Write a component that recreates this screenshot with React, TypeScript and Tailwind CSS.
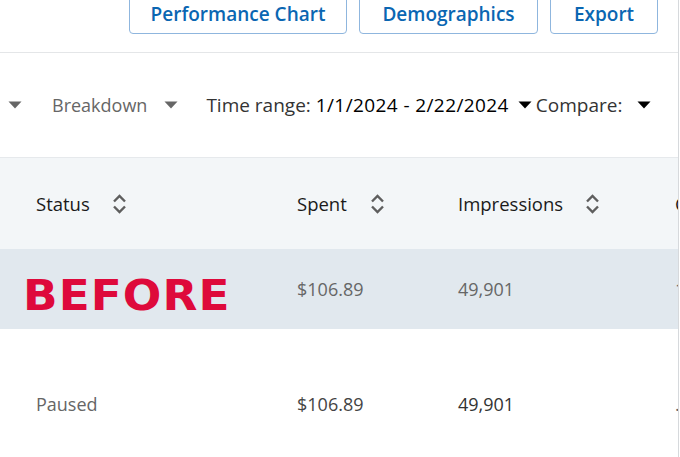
import React from "react";

const font = { fontFamily: '"Open Sans", "Noto Sans", sans-serif' };

function Caret({ color }: { color: string }) {
  return (
    <svg width="14" height="8" viewBox="0 0 14 8" className="shrink-0">
      <path d="M0.5 0.5 L13.5 0.5 L7 7.5 Z" fill={color} />
    </svg>
  );
}

function SortIcon() {
  return (
    <svg width="17" height="22" viewBox="0 0 17 22" className="shrink-0">
      <path d="M3 8.5 L8.5 3 L14 8.5" fill="none" stroke="#5e5e5e" strokeWidth="2.4" />
      <path d="M3 13.5 L8.5 19 L14 13.5" fill="none" stroke="#5e5e5e" strokeWidth="2.4" />
    </svg>
  );
}

export default function App() {
  return (
    <div className="w-[680px] h-[457px] overflow-hidden bg-white" style={font}>
      <div className="w-[679px] h-full border-r border-[#d6d9dc] overflow-hidden">
        {/* top buttons */}
        <div className="h-[53px] border-b border-[#e4e6e8] flex items-start">
          <div className="flex -mt-[10px] ml-[129px]">
            <button className="h-[44px] w-[218px] border border-[#8fb6de] rounded-[4px] text-[#0a66b2] text-[19px] font-semibold pt-[4px]">
              Performance Chart
            </button>
            <button className="h-[44px] w-[179px] ml-[12px] border border-[#8fb6de] rounded-[4px] text-[#0a66b2] text-[19px] font-semibold pt-[4px]">
              Demographics
            </button>
            <button className="h-[44px] w-[108px] ml-[12px] border border-[#8fb6de] rounded-[4px] text-[#0a66b2] text-[19px] font-semibold pt-[4px]">
              Export
            </button>
          </div>
        </div>
        {/* filter row */}
        <div className="h-[105px] border-b border-[#e6e9ec] flex items-center text-[18px]">
          <div className="ml-[8px]"><Caret color="#666666" /></div>
          <span className="ml-[30px] text-[#666666]">Breakdown</span>
          <div className="ml-[17px]"><Caret color="#666666" /></div>
          <span className="ml-[28px] text-[#333333] text-[19px]">Time range: <span className="text-black tracking-[0.4px]">1/1/2024 - 2/22/2024</span></span>
          <div className="ml-[9px]"><Caret color="#000000" /></div>
          <span className="ml-[4px] text-[#333333] text-[19px]">Compare:</span>
          <div className="ml-[15px]"><Caret color="#000000" /></div>
        </div>
        {/* header */}
        <div className="h-[91px] bg-[#f3f6f8] grid grid-cols-[297px_161px_217px_200px] items-center text-[18.5px] text-[#1a1a1a]">
          <div className="pl-[36px] flex items-center gap-[21px]">Status<SortIcon /></div>
          <div className="flex items-center gap-[22px]">Spent<SortIcon /></div>
          <div className="flex items-center gap-[21px]">Impressions<SortIcon /></div>
          <div>Clicks</div>
        </div>
        {/* row 1 */}
        <div className="h-[80px] bg-[#e1e8ee] grid grid-cols-[297px_161px_217px_200px] items-center text-[18px] text-[#666666]">
          <div className="pl-[23px] pt-[14px]">
            <div className="origin-left scale-x-[108%] text-[#de0a3b] text-[42px] font-bold leading-none tracking-[1px]" style={{ fontFamily: '"DejaVu Sans", sans-serif' }}>BEFORE</div>
          </div>
          <div>$106.89</div>
          <div>49,901</div>
          <div>1,024</div>
        </div>
        {/* row 2 */}
        <div className="pt-[62px] grid grid-cols-[297px_161px_217px_200px] items-center text-[18px] text-[#666666]">
          <div className="pl-[36px]">Paused</div>
          <div className="text-[#444444]">$106.89</div>
          <div className="text-[#333333]">49,901</div>
          <div>.</div>
        </div>
      </div>
    </div>
  );
}
